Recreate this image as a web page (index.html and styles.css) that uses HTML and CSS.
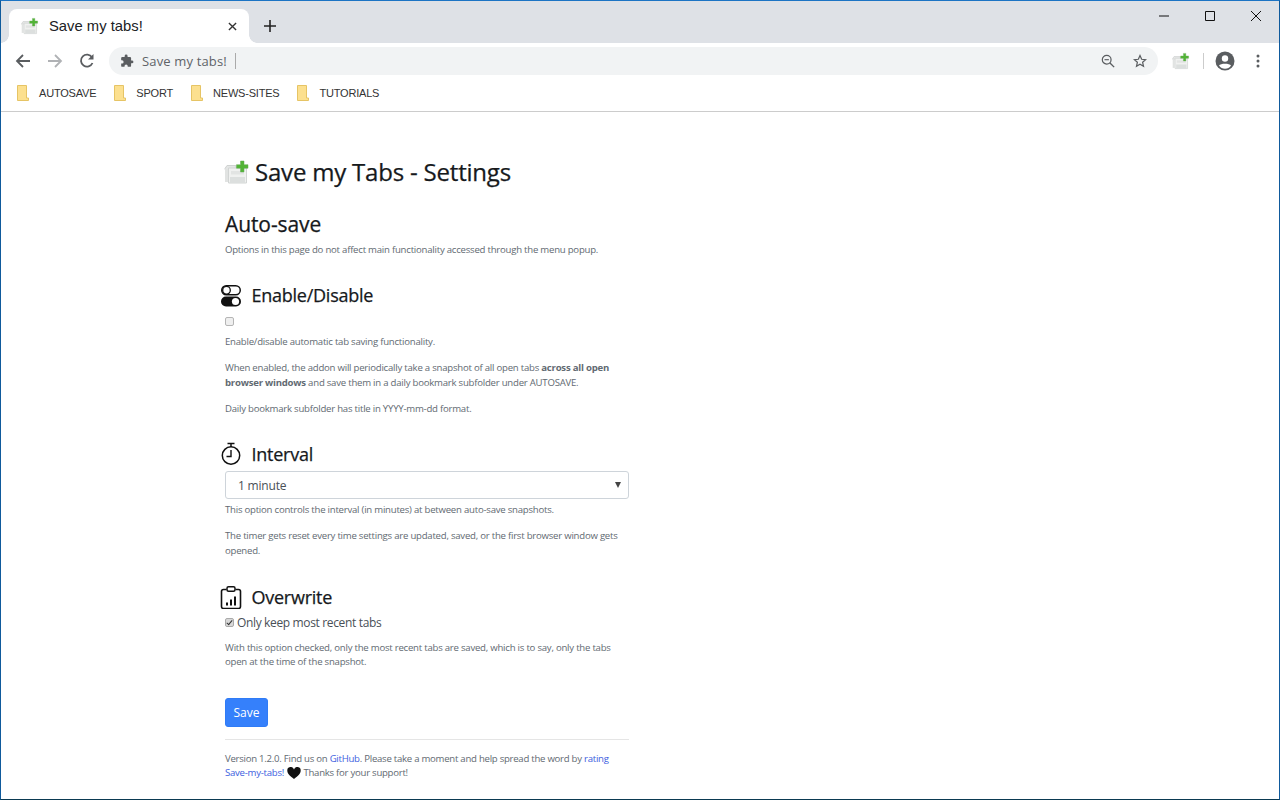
FILE: index.html

```html
<!DOCTYPE html>
<html lang="en">
<head>
  <meta charset="UTF-8" />
  <title>Save my tabs!</title>
  <link rel="stylesheet" href="styles.css">
</head>
<body>
  <svg class="defs" width="0" height="0">
    <symbol id="appicon" viewBox="0 0 26 26">
      <path d="M1 9.500 3 6.500h9v4H1z" fill="#e4e6e5" stroke="#cfd2d1"/>
      <path d="M1 10h3v13H1z" fill="#e1e3e2"/>
      <path d="M4.500 9h18v15h-18z" fill="#f0f1f0" stroke="#d2d5d4"/>
      <path d="M7 12h13v3.500H7z" fill="#e2e4e3"/>
      <path d="M6 18h15v6H6z" fill="#dcdfde"/>
      <path d="M16.500 2h3.500v3.700h4V9.200h-4v3.800h-3.500V9.200h-4V5.700h4z" fill="#52b436" stroke="#67a858" stroke-width=".5"/>
    </symbol>
    <symbol id="folder" viewBox="0 0 12 16">
      <path d="M.5.500h9v12.500h2v2.500H.5z" fill="#fce08f" stroke="#e6c465"/>
    </symbol>
  </svg>

  <div class="window">
    <div class="tabstrip">
      <div class="tab">
        <svg class="favicon"><use href="#appicon"/></svg>
        <span class="tab-title">Save my tabs!</span>
        <svg class="tab-close" viewBox="0 0 10 10"><path d="M1 1l8 8M9 1l-8 8" stroke="#333" stroke-width="1.500"/></svg>
      </div>
      <svg class="new-tab" viewBox="0 0 12 12"><path d="M6 0v12M0 6h12" stroke="#222" stroke-width="1.600"/></svg>
      <div class="caption">
        <svg viewBox="0 0 46 30"><path d="M18 15h10" stroke="#111"/></svg>
        <svg viewBox="0 0 46 30"><path d="M18.500 10.500h9v9h-9z" fill="none" stroke="#111"/></svg>
        <svg viewBox="0 0 46 30"><path d="M18 10l10 10M28 10l-10 10" stroke="#111"/></svg>
      </div>
    </div>

    <div class="toolbar">
      <svg class="nav" viewBox="0 0 16 16"><path d="M15 8H2M8 2L2 8l6 6" fill="none" stroke="#5a5d60" stroke-width="1.800"/></svg>
      <svg class="nav" viewBox="0 0 16 16"><path d="M1 8h13M8 2l6 6-6 6" fill="none" stroke="#b0b2b5" stroke-width="1.800"/></svg>
      <svg class="nav" viewBox="0 0 16 16"><path d="M13.500 10A6 6 0 1 1 13 4.300" fill="none" stroke="#5a5d60" stroke-width="1.800"/><path d="M14.500 1v5.500H9z" fill="#5a5d60"/></svg>
      <div class="omnibox">
        <svg class="puzzle" viewBox="0 0 24 24"><path d="M20.500 11H19V7a2 2 0 0 0-2-2h-4V3.500a2.500 2.500 0 0 0-5 0V5H4a2 2 0 0 0-2 2v3.800h1.500a2.700 2.700 0 0 1 0 5.400H2V20a2 2 0 0 0 2 2h3.800v-1.500a2.700 2.700 0 0 1 5.400 0V22H17a2 2 0 0 0 2-2v-4h1.500a2.500 2.500 0 0 0 0-5z" fill="#5a5d60"/></svg>
        <span class="omni-text">Save my tabs!</span>
        <span class="omni-caret"></span>
        <svg class="omni-icon zoom-out" viewBox="0 0 16 16"><circle cx="6.500" cy="6.500" r="5" fill="none" stroke="#5a5d60" stroke-width="1.400"/><path d="M10 10l5 5" stroke="#5a5d60" stroke-width="1.600"/><path d="M4 6.500h5" stroke="#5a5d60" stroke-width="1.300"/></svg>
        <svg class="omni-icon" viewBox="0 0 16 16"><path d="M8 1.800l1.900 4.200 4.500.5-3.400 3 1 4.500L8 11.700 4 14l1-4.500-3.400-3 4.500-.5z" fill="none" stroke="#5a5d60" stroke-width="1.400"/></svg>
      </div>
      <svg class="ext-icon"><use href="#appicon"/></svg>
      <span class="tool-sep"></span>
      <svg class="avatar" viewBox="0 0 20 20"><circle cx="10" cy="10" r="9.500" fill="#5a5d60"/><circle cx="10" cy="7.500" r="3.200" fill="#fff"/><path d="M4 14.500c1.500-2.400 10.500-2.400 12 0-1.500 2.300-3.500 3.200-6 3.200s-4.500-.9-6-3.200z" fill="#fff"/></svg>
      <svg class="menu-dots" viewBox="0 0 4 14"><circle cx="2" cy="2" r="1.500" fill="#5a5d60"/><circle cx="2" cy="7" r="1.500" fill="#5a5d60"/><circle cx="2" cy="12" r="1.500" fill="#5a5d60"/></svg>
    </div>

    <div class="bookmarks">
      <div class="bookmark"><svg class="folder"><use href="#folder"/></svg>AUTOSAVE</div>
      <div class="bookmark"><svg class="folder"><use href="#folder"/></svg>SPORT</div>
      <div class="bookmark"><svg class="folder"><use href="#folder"/></svg>NEWS-SITES</div>
      <div class="bookmark"><svg class="folder"><use href="#folder"/></svg>TUTORIALS</div>
    </div>

    <div class="page">
      <main class="settings">
        <h1><svg class="title-icon"><use href="#appicon"/></svg>Save my Tabs - Settings</h1>
        <h2>Auto-save</h2>
        <p class="note">Options in this page do not affect main functionality accessed through the menu popup.</p>

        <h3>
          <svg class="section-icon" viewBox="0 0 24 24"><rect x="1.750" y="2.750" width="18.500" height="9" rx="4.500" fill="none" stroke="#111" stroke-width="1.500"/><circle cx="6.500" cy="7.250" r="3.800" fill="none" stroke="#111" stroke-width="1.300"/><rect x="1" y="13.500" width="20" height="10" rx="5" fill="#111"/><circle cx="15.500" cy="18.500" r="3.600" fill="#fff"/></svg>
          Enable/Disable
        </h3>
        <div class="check-row"><span class="box"></span></div>
        <p class="note">Enable/disable automatic tab saving functionality.</p>
        <p class="note">When enabled, the addon will periodically take a snapshot of all open tabs <b>across all open browser windows</b> and save them in a daily bookmark subfolder under AUTOSAVE.</p>
        <p class="note">Daily bookmark subfolder has title in YYYY-mm-dd format.</p>

        <h3>
          <svg class="section-icon" viewBox="0 0 24 24"><circle cx="11" cy="13.500" r="8.700" fill="none" stroke="#111" stroke-width="1.500"/><path d="M11 8v6.500H6.500" fill="none" stroke="#111" stroke-width="1.400"/><path d="M7.500 1.500h7M11 1.500v3.500" stroke="#111" stroke-width="1.500"/></svg>
          Interval
        </h3>
        <div class="select"><span>1 minute</span><span class="select-arrow"></span></div>
        <p class="note">This option controls the interval (in minutes) at between auto-save snapshots.</p>
        <p class="note">The timer gets reset every time settings are updated, saved, or the first browser window gets opened.</p>

        <h3 class="last">
          <svg class="section-icon" viewBox="0 0 24 24"><path d="M6.500 4.500H3.500a2 2 0 0 0-2 2v15a2 2 0 0 0 2 2h15a2 2 0 0 0 2-2v-15a2 2 0 0 0-2-2h-3" fill="none" stroke="#111" stroke-width="1.600"/><rect x="7" y="1.800" width="8" height="4.500" rx="1.500" fill="none" stroke="#111" stroke-width="1.500"/><path d="M6 17.500h2v3H6zM10 14.500h2v6h-2zM14 11.500h2v9h-2z" fill="#111"/></svg>
          Overwrite
        </h3>
        <div class="check-row labelled"><span class="box checked"></span>Only keep most recent tabs</div>
        <p class="note">With this option checked, only the most recent tabs are saved, which is to say, only the tabs open at the time of the snapshot.</p>

        <button class="save">Save</button>
        <hr>
        <p class="note foot">Version 1.2.0. Find us on <a href="#">GitHub</a>. Please take a moment and help spread the word by <a href="#">rating Save-my-tabs!</a> <svg class="heart" viewBox="0 0 16 14"><path d="M8 14C3 10 .2 7.500.2 4.300A4 4 0 0 1 8 2.800a4 4 0 0 1 7.800 1.500C15.800 7.500 13 10 8 14z" fill="#111"/></svg> Thanks for your support!</p>
      </main>
    </div>
  </div>
</body>
</html>
```

FILE: styles.css

```css
html, body {
  margin: 0;
  padding: 0;
  height: 100%;
  overflow: hidden;
}
body {
  font-family: "Open Sans", "Noto Sans", sans-serif;
  color: #212529;
  background: #fff;
}
.defs {
  position: absolute;
}
.window {
  height: 800px;
  box-sizing: border-box;
  border: 1px solid #0f5a9c;
  border-top-color: #1c74c4;
  border-bottom-color: #0b3a52;
  display: flex;
  flex-direction: column;
}
.tabstrip {
  height: 42px;
  flex: none;
  background: #dee1e6;
  display: flex;
  align-items: flex-end;
  padding-left: 8px;
}
.tab {
  width: 240px;
  height: 34px;
  box-sizing: border-box;
  background: #fff;
  border-radius: 8px 8px 0 0;
  display: flex;
  align-items: center;
  padding: 0 0 0 12px;
  position: relative;
}
/* the little flares where the tab meets the toolbar */
.tab::before,
.tab::after {
  content: "";
  position: absolute;
  bottom: 0;
  width: 8px;
  height: 8px;
}
.tab::before {
  left: -8px;
  background: radial-gradient(circle at 0 0, #dee1e6 7.500px, #fff 8px);
}
.tab::after {
  right: -8px;
  background: radial-gradient(circle at 100% 0, #dee1e6 7.500px, #fff 8px);
}
.favicon {
  width: 18px;
  height: 18px;
  flex: none;
}
.tab-title {
  font-family: "Liberation Sans", sans-serif;
  font-size: 14.800px;
  color: #202124;
  margin-left: 10px;
  flex: 1;
}
.tab-close {
  width: 9px;
  height: 9px;
  margin-right: 12px;
}
.new-tab {
  width: 12px;
  height: 12px;
  margin: 0 0 11px 15px;
}
.caption {
  margin-left: auto;
  align-self: flex-start;
  display: flex;
}
.caption svg {
  width: 46px;
  height: 30px;
}
.toolbar {
  height: 36px;
  flex: none;
  display: flex;
  align-items: center;
  background: #fff;
}
.nav {
  width: 16px;
  height: 16px;
  margin-left: 14px;
  margin-right: 2px;
}
.omnibox {
  width: 1049px;
  height: 28px;
  margin-left: 12px;
  padding: 0 11px;
  box-sizing: border-box;
  background: #f1f3f4;
  border-radius: 14px;
  display: flex;
  align-items: center;
}
.puzzle {
  width: 14px;
  height: 14px;
}
.omni-text {
  font-size: 13px;
  letter-spacing: .15px;
  color: #5f6368;
  margin-left: 8px;
}
.omni-caret {
  width: 1px;
  height: 16px;
  background: #aaa;
  margin-left: 8px;
}
.omni-icon {
  width: 14px;
  height: 14px;
  margin-left: 18px;
}
.zoom-out {
  margin-left: auto;
}
.ext-icon {
  width: 18px;
  height: 18px;
  margin-left: 14px;
}
.tool-sep {
  width: 1px;
  height: 16px;
  background: #ccc;
  margin-left: 13px;
}
.avatar {
  width: 20px;
  height: 20px;
  margin-left: 11px;
}
.menu-dots {
  width: 4px;
  height: 14px;
  margin-left: 21px;
}
.bookmarks {
  height: 33px;
  flex: none;
  box-sizing: border-box;
  border-bottom: 1px solid #ccc;
  background: #fff;
  display: flex;
  align-items: center;
  padding: 0 0 5px 16px;
  font-family: "Liberation Sans", sans-serif;
  font-size: 11px;
  letter-spacing: -.2px;
  color: #333;
}
.bookmark {
  display: flex;
  align-items: center;
  margin-right: 18px;
}
.folder {
  width: 12px;
  height: 16px;
  margin-right: 10px;
}
.page {
  flex: 1;
  overflow: hidden;
}
.settings {
  width: 404px;
  margin-left: 224px;
  padding-top: 42px;
}
h1, h2, h3 {
  font-weight: 500;
  color: #16191c;
  -webkit-text-stroke: .25px #16191c;
}
h1 {
  margin: 0;
  font-size: 24px;
  letter-spacing: -.2px;
  line-height: 36px;
  display: flex;
  align-items: center;
}
.title-icon {
  width: 26px;
  height: 26px;
  margin-left: -1px;
  margin-right: 5px;
  flex: none;
}
h2 {
  margin: 22px 0 0;
  font-size: 21px;
  letter-spacing: -.1px;
  line-height: 24px;
}
h3 {
  margin: 26px 0 0 -5px;
  font-size: 18px;
  letter-spacing: -.25px;
  line-height: 24px;
  display: flex;
  align-items: center;
}
h3.last {
  margin-top: 27px;
}
.section-icon {
  width: 24px;
  height: 24px;
  margin-right: 7.500px;
  flex: none;
}
.note {
  margin: 11.600px 0 0;
  font-size: 9.600px;
  letter-spacing: -.23px;
  line-height: 14.400px;
  color: #626a72;
}
h2 + .note {
  margin-top: 7px;
}
.check-row {
  height: 14px;
  margin-top: 7px;
  display: flex;
  align-items: center;
  font-size: 12px;
  letter-spacing: -.35px;
  color: #495057;
}
.check-row + .note {
  margin-top: 7px;
}
.labelled {
  height: 18px;
  margin-top: 4px;
}
.labelled + .note {
  margin-top: 10px;
}
.box {
  width: 9px;
  height: 9px;
  box-sizing: border-box;
  border: 1px solid #b5b5b5;
  border-radius: 2px;
  background: #efefef;
  margin-right: 3px;
}
.box.checked {
  background: #d8d8d8;
  border-color: #aaa;
  position: relative;
}
.box.checked::after {
  content: "";
  position: absolute;
  left: 2px;
  top: 0;
  width: 2px;
  height: 5px;
  border: solid #333;
  border-width: 0 1px 1px 0;
  transform: rotate(40deg);
}
.select {
  height: 28px;
  box-sizing: border-box;
  margin-top: 5px;
  padding: 0 7px 0 12px;
  border: 1px solid #ced4da;
  border-radius: 3px;
  display: flex;
  align-items: center;
  justify-content: space-between;
  font-size: 12px;
  letter-spacing: -.2px;
  color: #495057;
}
.select-arrow {
  width: 0;
  height: 0;
  border-left: 3px solid transparent;
  border-right: 3px solid transparent;
  border-top: 6px solid #444;
}
.select + .note {
  margin-top: 4px;
}
.save {
  display: block;
  margin-top: 28px;
  width: 43px;
  height: 29px;
  padding: 0;
  border: 1px solid #2f7bf6;
  border-radius: 3px;
  background: #3580fb;
  color: #fff;
  font: 12px "Open Sans", sans-serif;
}
hr {
  margin: 12px 0 0;
  border: 0;
  border-top: 1px solid #e5e5e5;
}
.foot {
  margin-top: 12px;
  letter-spacing: -.26px;
}
.note a {
  color: #3d5ee0;
  text-decoration: none;
}
.heart {
  width: 14px;
  height: 12px;
  margin-left: 1px;
  vertical-align: -3px;
}
```
